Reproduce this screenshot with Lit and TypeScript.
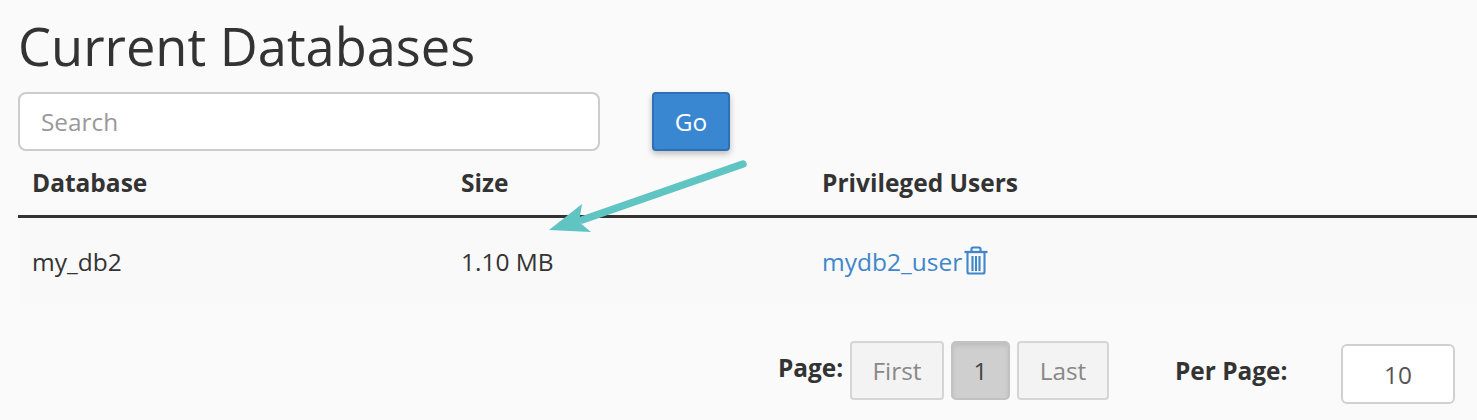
import { LitElement, html, css } from "lit";
import { customElement } from "lit/decorators.js";

@customElement("app-root")
export class AppRoot extends LitElement {
  static styles = css`
    :host {
      display: block;
      width: 1477px;
      height: 420px;
      overflow: hidden;
      background: #fafafa;
      font-family: "Open Sans", "Noto Sans", sans-serif;
      color: #333;
      position: relative;
    }
    .page {
      display: flex;
      flex-direction: column;
      padding: 0 0 0 18px;
    }
    h1 {
      margin: 0;
      padding-top: 14px;
      font-size: 52.4px;
      line-height: 64px;
      font-weight: 400;
      color: #333;
    }
    .search {
      display: flex;
      align-items: flex-start;
      gap: 52px;
      margin-top: 14px;
    }
    .input {
      box-sizing: border-box;
      width: 582px;
      height: 59px;
      border: 2px solid #ccc;
      border-radius: 8px;
      background: #fff;
      padding-left: 21px;
      display: flex;
      align-items: center;
      font-size: 24.4px;
      color: #999;
    }
    .go {
      box-sizing: border-box;
      width: 78px;
      height: 59px;
      border: 2px solid #2f6fb3;
      border-radius: 4px;
      background: #3a87d1;
      color: #fff;
      display: flex;
      align-items: center;
      justify-content: center;
      font-size: 24.4px;
      box-shadow: 0 3px 6px rgba(0, 0, 0, 0.25);
    }
    .grid {
      display: grid;
      grid-template-columns: 429px 361px 1fr;
    }
    .head {
      box-sizing: content-box;
      height: 63px;
      padding-bottom: 1px;
      border-bottom: 3px solid #333;
      font-weight: 700;
      font-size: 24.5px;
      color: #333;
      align-items: center;
    }
    .cell {
      padding-left: 14px;
      display: flex;
      align-items: center;
    }
    .row {
      height: 87px;
      font-size: 24.5px;
      background: #f9f9f9;
    }
    .row .cell {
      padding-bottom: 1px;
    }
    .link {
      color: #3f86cb;
      display: flex;
      align-items: center;
      gap: 2px;
    }
    .link svg {
      display: block;
      margin-top: -1px;
    }
    .pager {
      display: flex;
      margin-top: 36px;
      align-items: flex-start;
      font-size: 24.4px;
    }
    .label {
      font-weight: 700;
      color: #333;
    }
    .page-label {
      margin-left: 760px;
      width: 72px;
      line-height: 54px;
    }
    .btns {
      display: flex;
      gap: 7px;
    }
    .btn {
      box-sizing: border-box;
      height: 59px;
      width: 94px;
      border: 2px solid #d5d5d5;
      border-radius: 4px;
      background: #f3f3f3;
      color: #888;
      display: flex;
      align-items: center;
      justify-content: center;
    }
    .btn.active {
      background: #cfcfcf;
      border-color: #c2c2c2;
      border-radius: 5px;
      color: #444;
      box-shadow: inset 0 3px 4px rgba(0, 0, 0, 0.08);
      width: 59px;
    }
    .btn.last {
      width: 92px;
    }
    .per-label {
      margin-left: 66px;
      width: 166px;
      line-height: 60px;
    }
    .per {
      box-sizing: border-box;
      margin-top: 3px;
      width: 114px;
      height: 60px;
      border: 2px solid #d0d0d0;
      border-radius: 6px;
      background: #fff;
      color: #555;
      display: flex;
      align-items: center;
      justify-content: center;
    }
    .arrow {
      position: absolute;
      left: 540px;
      top: 150px;
      pointer-events: none;
    }
  `;

  render() {
    return html`
      <div class="page">
        <h1>Current Databases</h1>
        <div class="search">
          <div class="input">Search</div>
          <div class="go">Go</div>
        </div>
        <div class="grid head">
          <div class="cell">Database</div>
          <div class="cell">Size</div>
          <div class="cell">Privileged Users</div>
        </div>
        <div class="grid row">
          <div class="cell">my_db2</div>
          <div class="cell">1.10 MB</div>
          <div class="cell">
            <span class="link">mydb2_user<svg width="24" height="29" viewBox="0 0 24 29" fill="none" stroke="currentColor" stroke-width="2.100">
                <path d="M0.500 6h23" stroke-width="2.300" />
                <path d="M7.500 5V3a1.500 1.500 0 0 1 1.500-1.500h6A1.500 1.500 0 0 1 16.500 3v2" />
                <path d="M3.500 7v19a1.500 1.500 0 0 0 1.500 1.500h14A1.500 1.500 0 0 0 20.500 26V7" />
                <path d="M8.500 10v15M12 10v15M15.500 10v15" />
              </svg></span>
          </div>
        </div>
        <div class="pager">
          <span class="label page-label">Page:</span>
          <div class="btns">
            <div class="btn">First</div>
            <div class="btn active">1</div>
            <div class="btn last">Last</div>
          </div>
          <span class="label per-label">Per Page:</span>
          <div class="per">10</div>
        </div>
      </div>
      <svg class="arrow" width="220" height="90" viewBox="0 0 220 90">
        <path d="M203 14 L42 70" stroke="#5fc4c2" stroke-width="7.500" stroke-linecap="round" fill="none" />
        <path d="M9 80 L42 54 L39 72 L51 82 Z" fill="#5fc4c2" />
      </svg>
    `;
  }
}
